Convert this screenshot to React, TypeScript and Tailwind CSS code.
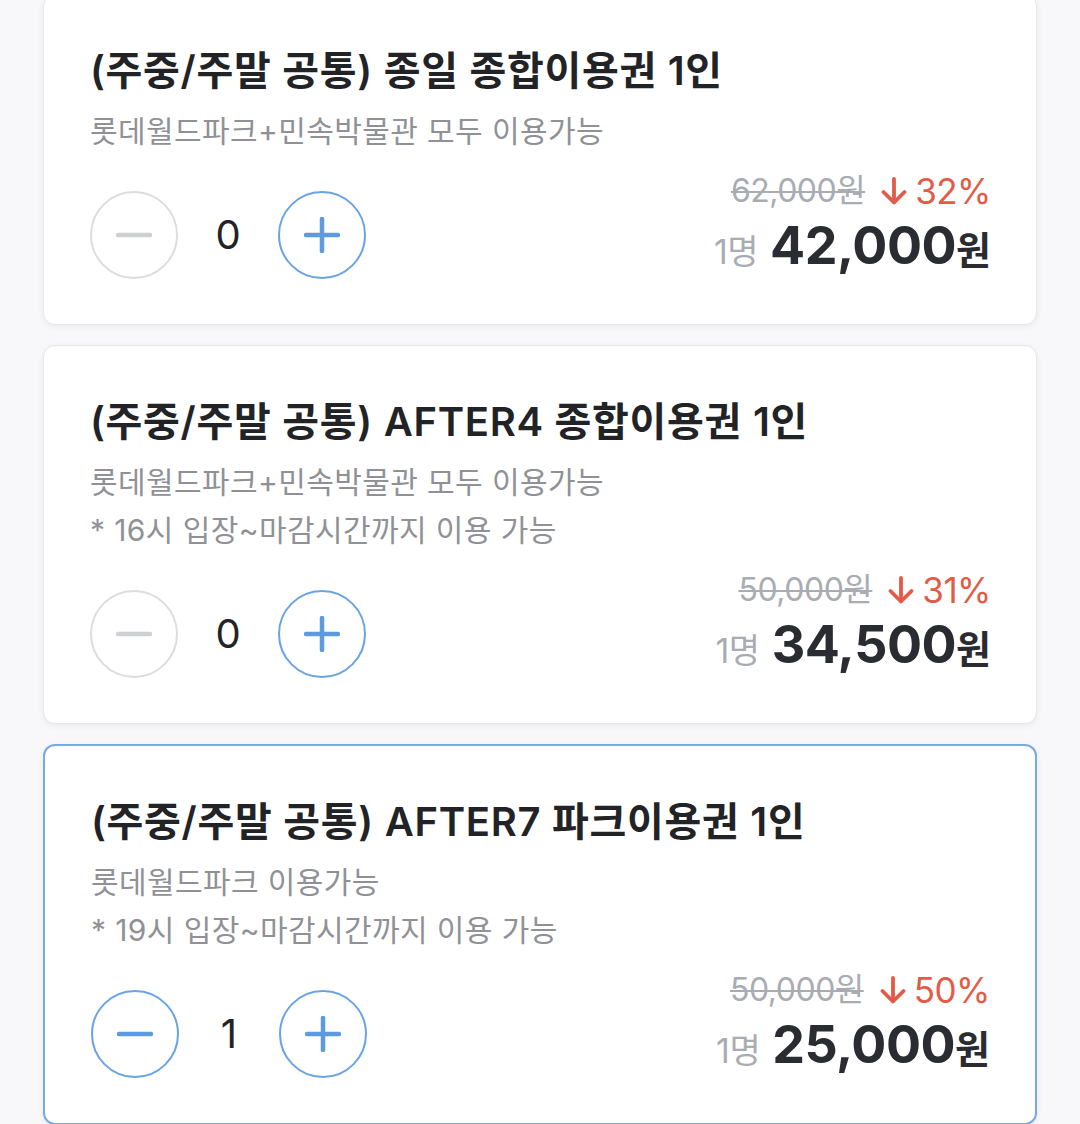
interface Ticket {
  title: string
  lines: string[]
  count: number
  original: string
  discount: string
  price: string
}

const tickets: Ticket[] = [
  {
    title: '(주중/주말 공통) 종일 종합이용권 1인',
    lines: ['롯데월드파크+민속박물관 모두 이용가능'],
    count: 0,
    original: '62,000원',
    discount: '32%',
    price: '42,000',
  },
  {
    title: '(주중/주말 공통) AFTER4 종합이용권 1인',
    lines: ['롯데월드파크+민속박물관 모두 이용가능', '* 16시 입장~마감시간까지 이용 가능'],
    count: 0,
    original: '50,000원',
    discount: '31%',
    price: '34,500',
  },
  {
    title: '(주중/주말 공통) AFTER7 파크이용권 1인',
    lines: ['롯데월드파크 이용가능', '* 19시 입장~마감시간까지 이용 가능'],
    count: 1,
    original: '50,000원',
    discount: '50%',
    price: '25,000',
  },
]

function CircleButton({ kind, active }: { kind: 'minus' | 'plus'; active: boolean }) {
  const color = active ? '#5c9be0' : '#cfd0d4'
  return (
    <button
      className={`flex h-[88px] w-[88px] items-center justify-center rounded-full border-2 bg-white ${
        active ? 'border-[#6aa3e3]' : 'border-[#dcdde0]'
      }`}
    >
      <svg width="36" height="36" viewBox="0 0 36 36" fill="none">
        <line x1="2" y1="18" x2="34" y2="18" stroke={color} strokeWidth="4.5" strokeLinecap="round" />
        {kind === 'plus' && (
          <line x1="18" y1="2" x2="18" y2="34" stroke={color} strokeWidth="4.5" strokeLinecap="round" />
        )}
      </svg>
    </button>
  )
}

function DownArrow() {
  return (
    <svg width="26" height="28" viewBox="0 0 26 28" fill="none" className="ml-[16px] mr-[8px]">
      <path d="M13 2v23" stroke="#e35b47" strokeWidth="3.8" strokeLinecap="round" />
      <path d="M2.5 15 13 25.5 23.5 15" stroke="#e35b47" strokeWidth="3.8" strokeLinecap="round" strokeLinejoin="round" />
    </svg>
  )
}

function TicketCard({ ticket, selected }: { ticket: Ticket; selected: boolean }) {
  return (
    <div
      className={`rounded-[12px] bg-white pl-[46px] pr-[45px] pt-[52px] pb-[45px] shadow-[0_2px_6px_rgba(0,0,0,0.06)] ${
        selected ? 'border-2 border-[#78a9e0]' : 'border border-[#e6e7ea]'
      }`}
    >
      <h2 className="text-[40px] leading-[48px] font-semibold tracking-[0.7px] text-[#222326]">
        {ticket.title}
      </h2>
      <div className="mt-[12px]">
        {ticket.lines.map((line) => (
          <p key={line} className="text-[30px] leading-[48px] tracking-[0.4px] text-[#909196]">
            {line}
          </p>
        ))}
      </div>

      <div className="mt-[16px] flex items-end justify-between">
        <div className="flex items-center">
          <CircleButton kind="minus" active={ticket.count > 0} />
          <span className="w-[100px] text-center text-[40px] leading-none text-[#222326]">
            {ticket.count}
          </span>
          <CircleButton kind="plus" active />
        </div>

        <div className="mb-[7px] flex flex-col items-end">
          <div className="flex h-[40px] items-center">
            <span className="text-[32px] leading-[40px] tracking-[-0.5px] text-[#a9acb2] line-through decoration-[2px]">
              {ticket.original}
            </span>
            <DownArrow />
            <span className="text-[35px] leading-[40px] tracking-[-0.5px] text-[#e35b47]">
              {ticket.discount}
            </span>
          </div>
          <div className="mt-[9px] flex items-baseline leading-none">
            <span className="text-[34px] leading-none tracking-[-0.5px] text-[#a9acb2]">1명</span>
            <span className="ml-[12px] text-[52px] leading-none font-bold tracking-[-0.5px] text-[#2a2c31]">
              {ticket.price}
            </span>
            <span className="text-[38px] leading-none font-bold text-[#2a2c31]">원</span>
          </div>
        </div>
      </div>
    </div>
  )
}

export default function App() {
  return (
    <div
      className="min-h-[1124px] overflow-hidden bg-[#f8f8fa]"
      style={{ fontFamily: 'Inter, "Noto Sans CJK KR", sans-serif' }}
    >
      <div className="-mt-[6px] flex flex-col gap-[20px] px-[43px] pb-[20px]">
        {tickets.map((ticket, i) => (
          <TicketCard key={ticket.title} ticket={ticket} selected={i === 2} />
        ))}
      </div>
    </div>
  )
}
